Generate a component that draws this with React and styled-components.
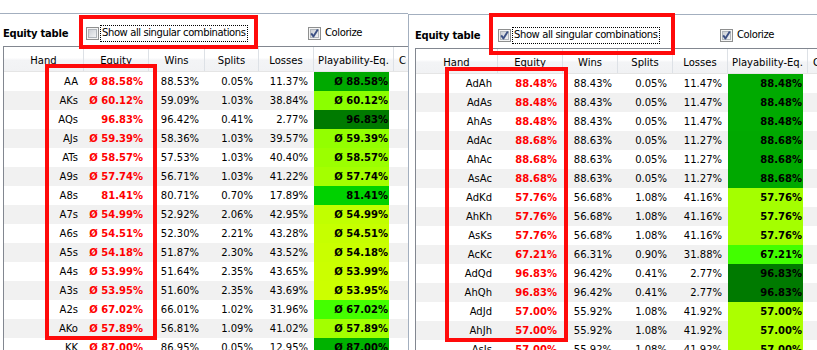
import React, { useId } from 'react';
import styled, { createGlobalStyle } from 'styled-components';

const GlobalStyle = createGlobalStyle`
  html, body { margin: 0; padding: 0; background: #fff; overflow: hidden; }
  body { font-family: "DejaVu Sans", "Liberation Sans", sans-serif; color: #000; }
`;

const Page = styled.div`
  display: flex;
  width: 817px;
  height: 350px;
  overflow: hidden;
  background: #fff;
`;

const Panel = styled.section`
  position: relative;
  box-sizing: border-box;
  flex: 0 0 ${(p) => p.$width}px;
  margin-top: ${(p) => p.$top}px;
  border-top: 1px solid #a3afbf;
  border-left: ${(p) => (p.$edge ? '1px solid #a3afbf' : '0')};
  padding-left: ${(p) => p.$indent}px;
`;

const Toolbar = styled.div`
  box-sizing: border-box;
  display: flex;
  align-items: center;
  height: ${(p) => p.$h}px;
  padding-top: ${(p) => p.$pad}px;
`;

const Title = styled.div`
  flex: 0 0 83px;
  font-weight: bold;
  font-size: 10px;
  letter-spacing: -0.25px;
  white-space: nowrap;
`;

const CheckGroup = styled.label`
  display: flex;
  align-items: center;
  gap: 1px;
  flex: 0 0 ${(p) => p.$w || 'auto'};
  font-size: 10px;
  letter-spacing: -0.4px;
  white-space: nowrap;
`;

const CheckText = styled.span`
  padding: 1px 1px 2px 1px;
  line-height: 12px;
  border: 1px dotted ${(p) => (p.$focus ? '#000' : 'transparent')};
  margin-left: ${(p) => (p.$focus ? 0 : 1)}px;
`;

const Annotation = styled.div`
  position: absolute;
  box-sizing: border-box;
  left: ${(p) => p.$x}px;
  top: ${(p) => p.$y}px;
  width: ${(p) => p.$w}px;
  height: ${(p) => p.$h}px;
  border: 4px solid #ff0a0a;
  pointer-events: none;
`;

const Table = styled.div`
  border-top: 1px solid #828790;
  border-left: 1px solid #828790;
  font-size: 10px;
`;

const HeaderRow = styled.div`
  display: grid;
  grid-template-columns: ${(p) => p.$cols};
  height: 25px;
  box-sizing: border-box;
  border-bottom: 1px solid #e5e5e5;
  background: linear-gradient(#ffffff 0%, #ffffff 45%, #f3f4f6 55%, #f1f2f4 100%);
`;

const HeaderCell = styled.div`
  box-sizing: border-box;
  border-right: ${(p) => (p.$last ? '0' : '1px solid #dde1e6')};
  text-align: ${(p) => (p.$last ? 'left' : 'center')};
  padding-left: ${(p) => (p.$last ? 5 : 0)}px;
  padding-top: 3px;
  line-height: 21px;
  white-space: nowrap;
  overflow: hidden;
`;

const Row = styled.div`
  display: grid;
  grid-template-columns: ${(p) => p.$cols};
  height: 19px;
  line-height: 19px;
  background: ${(p) => (p.$stripe ? '#f1f1f1' : '#ffffff')};
`;

const Cell = styled.div`
  text-align: right;
  padding-right: 6px;
  white-space: nowrap;
  overflow: hidden;
`;

const EquityCell = styled(Cell)`
  color: #ff0000;
  font-weight: bold;
`;

const PlayCell = styled.div`
  padding-right: 5px;
`;

const PlayBlock = styled.div`
  height: 19px;
  text-align: right;
  padding-right: 1px;
  font-weight: bold;
  white-space: nowrap;
`;

function playColor(e) {
  if (e <= 73.5) {
    const r = Math.round(Math.max(0, Math.min(255, 255 - (e - 49) * 10.4)));
    return `rgb(${r},255,0)`;
  }
  const g = Math.round(Math.max(100, 255 - (e - 73.5) * 5.7));
  return `rgb(0,${g},0)`;
}

function CheckBox({ checked }) {
  const id = useId().replace(/:/g, '');
  return (
    <svg width="13" height="13" viewBox="0 0 13 13" style={{ flex: '0 0 13px' }}>
      <defs>
        <linearGradient id={`g${id}`} x1="0" y1="0" x2="1" y2="1">
          <stop offset="0" stopColor="#c9cdd3" />
          <stop offset="1" stopColor="#f4f5f6" />
        </linearGradient>
      </defs>
      <rect x="0.5" y="0.5" width="12" height="12" fill="#f4f4f4" stroke="#8e8f8f" />
      <rect x="2.5" y="2.5" width="8" height="8" fill={`url(#g${id})`} stroke="#b0b5bb" />
      {checked && (
        <path d="M3.2 6.4 L5.4 9.4 L9.8 2.6" fill="none" stroke="#3c5084" strokeWidth="1.9" strokeLinejoin="round" />
      )}
    </svg>
  );
}

const HEADERS = ['Hand', 'Equity', 'Wins', 'Splits', 'Losses', 'Playability-Eq.', 'C'];

const LEFT_ROWS = [
  ['AA', 88.58, '88.53%', '0.05%', '11.37%', true],
  ['AKs', 60.12, '59.09%', '1.03%', '38.84%', true],
  ['AQs', 96.83, '96.42%', '0.41%', '2.77%', false],
  ['AJs', 59.39, '58.36%', '1.03%', '39.57%', true],
  ['ATs', 58.57, '57.53%', '1.03%', '40.40%', true],
  ['A9s', 57.74, '56.71%', '1.03%', '41.22%', true],
  ['A8s', 81.41, '80.71%', '0.70%', '17.89%', false],
  ['A7s', 54.99, '52.92%', '2.06%', '42.95%', true],
  ['A6s', 54.51, '52.30%', '2.21%', '43.28%', true],
  ['A5s', 54.18, '51.87%', '2.30%', '43.52%', true],
  ['A4s', 53.99, '51.64%', '2.35%', '43.65%', true],
  ['A3s', 53.95, '51.60%', '2.35%', '43.69%', true],
  ['A2s', 67.02, '66.01%', '1.02%', '31.96%', true],
  ['AKo', 57.89, '56.81%', '1.09%', '41.02%', true],
  ['KK', 87.0, '86.95%', '0.05%', '12.95%', true],
];

const RIGHT_ROWS = [
  ['AdAh', 88.48, '88.43%', '0.05%', '11.47%', false],
  ['AdAs', 88.48, '88.43%', '0.05%', '11.47%', false],
  ['AhAs', 88.48, '88.43%', '0.05%', '11.47%', false],
  ['AdAc', 88.68, '88.63%', '0.05%', '11.27%', false],
  ['AhAc', 88.68, '88.63%', '0.05%', '11.27%', false],
  ['AsAc', 88.68, '88.63%', '0.05%', '11.27%', false],
  ['AdKd', 57.76, '56.68%', '1.08%', '41.16%', false],
  ['AhKh', 57.76, '56.68%', '1.08%', '41.16%', false],
  ['AsKs', 57.76, '56.68%', '1.08%', '41.16%', false],
  ['AcKc', 67.21, '66.31%', '0.90%', '31.88%', false],
  ['AdQd', 96.83, '96.42%', '0.41%', '2.77%', false],
  ['AhQh', 96.83, '96.42%', '0.41%', '2.77%', false],
  ['AdJd', 57.0, '55.92%', '1.08%', '41.92%', false],
  ['AhJh', 57.0, '55.92%', '1.08%', '41.92%', false],
  ['AsJs', 57.0, '55.92%', '1.08%', '41.92%', false],
];

function EquityPanel({ cfg, rows }) {
  const fmt = (v, avg) => `${avg ? 'Ø ' : ''}${v.toFixed(2)}%`;
  return (
    <Panel $width={cfg.width} $top={cfg.top} $edge={cfg.edge} $indent={cfg.indent}>
      <Toolbar $h={cfg.barH} $pad={cfg.barPad}>
        <Title>Equity table</Title>
        <CheckGroup $w="222px">
          <CheckBox checked={cfg.singular} />
          <CheckText $focus>Show all singular combinations</CheckText>
        </CheckGroup>
        <CheckGroup>
          <CheckBox checked />
          <CheckText>Colorize</CheckText>
        </CheckGroup>
      </Toolbar>
      <Table>
        <HeaderRow $cols={cfg.cols}>
          {HEADERS.map((h, i) => (
            <HeaderCell key={h} $last={i === HEADERS.length - 1}>
              {h}
            </HeaderCell>
          ))}
        </HeaderRow>
        {rows.map(([hand, eq, wins, splits, losses, avg], i) => (
          <Row key={hand} $cols={cfg.cols} $stripe={i % 2 === 1}>
            <Cell>{hand}</Cell>
            <EquityCell>{fmt(eq, avg)}</EquityCell>
            <Cell>{wins}</Cell>
            <Cell>{splits}</Cell>
            <Cell>{losses}</Cell>
            <PlayCell>
              <PlayBlock style={{ background: playColor(eq) }}>{fmt(eq, avg)}</PlayBlock>
            </PlayCell>
            <div />
          </Row>
        ))}
      </Table>
      {cfg.marks.map((m, i) => (
        <Annotation key={i} $x={m[0]} $y={m[1]} $w={m[2]} $h={m[3]} />
      ))}
    </Panel>
  );
}

const LEFT = {
  width: 408,
  top: 13,
  edge: false,
  indent: 3,
  barH: 32,
  barPad: 6,
  singular: false,
  cols: '80px 65px 56px 54px 55px 80px 1fr',
  marks: [
    [79, 1, 179, 34],
    [45, 50, 112, 276],
  ],
};

const RIGHT = {
  width: 409,
  top: 14,
  edge: true,
  indent: 6,
  barH: 33,
  barPad: 7,
  singular: true,
  cols: '82px 65px 55px 55px 55px 80px 1fr',
  marks: [
    [80, -2, 186, 42],
    [36, 52, 123, 275],
  ],
};

export default function App() {
  return (
    <>
      <GlobalStyle />
      <Page>
        <EquityPanel cfg={LEFT} rows={LEFT_ROWS} />
        <EquityPanel cfg={RIGHT} rows={RIGHT_ROWS} />
      </Page>
    </>
  );
}
